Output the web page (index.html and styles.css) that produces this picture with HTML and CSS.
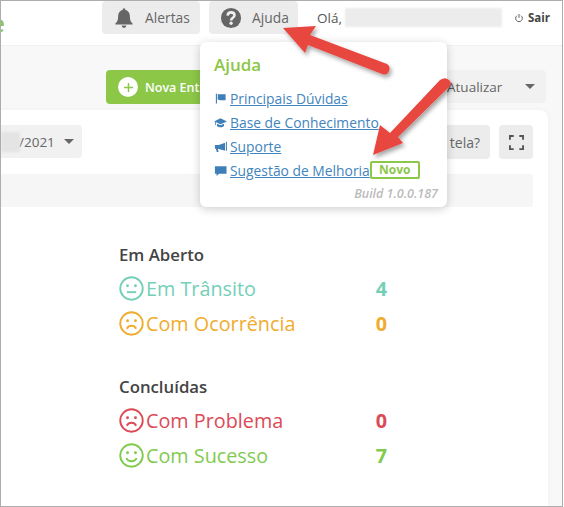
FILE: index.html
```html
<!DOCTYPE html>
<html lang="pt-BR">
<head>
<meta charset="utf-8">
<title>Ajuda</title>
<link rel="stylesheet" href="styles.css">
</head>
<body>
<div class="frame">
  <header class="topbar">
    <span class="logo">e</span>
    <div class="top-actions">
      <button class="top-btn alerts">
        <svg class="top-icon" viewBox="0 0 24 24"><path fill="#666" d="M12 1.5a1.6 1.6 0 0 0-1.6 1.7C7.3 4 5.6 6.6 5.6 9.8c0 5-1.3 6.6-3 8.2v1.2h18.8V18c-1.700-1.600-3-3.200-3-8.200 0-3.200-1.700-5.800-4.800-6.600A1.600 1.600 0 0 0 12 1.500zM9.500 20.300a2.500 2.500 0 0 0 5 0z"/></svg>
        Alertas
      </button>
      <button class="top-btn help">
        <svg class="top-icon help-icon" viewBox="0 0 24 24"><circle cx="12" cy="12" r="11" fill="#666"/><path fill="none" stroke="#eee" stroke-width="2.800" d="M8.300 9.300c.2-2.200 1.700-3.400 3.800-3.400 2.200 0 3.700 1.300 3.700 3.100 0 2.900-3.700 2.700-3.700 5.800"/><circle cx="12.100" cy="17.700" r="1.800" fill="#eee"/></svg>
        Ajuda
      </button>
      <span class="hello">Olá,</span>
      <span class="blur-name"></span>
      <span class="logout">
        <svg class="power" viewBox="0 0 12 12"><path fill="none" stroke="#444" stroke-width="1" d="M3.600 3.200a4 4 0 1 0 4.800 0M6 1.200v4.600"/></svg>
        <b>Sair</b>
      </span>
    </div>
  </header>

  <div class="toolbar">
    <button class="new-btn">
      <span class="plus-circle"><svg viewBox="0 0 12 12"><path stroke="#8cc748" stroke-width="1.600" d="M6 1v10M1 6h10"/></svg></span>
      Nova Entrega
    </button>
    <button class="refresh-btn">Atualizar<span class="caret"></span></button>
  </div>

  <main class="card">
    <div class="filters">
      <div class="date-select"><span class="blur-date"></span>/2021<span class="caret"></span></div>
      <div class="filter-right">
        <button class="tv-btn">tela?</button>
        <button class="full-btn">
          <svg viewBox="0 0 16 16"><path fill="none" stroke="#555" stroke-width="2" d="M1 5V1h4M11 1h4v4M15 11v4h-4M5 15H1v-4"/></svg>
        </button>
      </div>
    </div>
    <div class="band"></div>
    <section class="stats">
      <div class="group">
        <h3>Em Aberto</h3>
        <div class="stat teal">
          <svg class="face" viewBox="0 0 24 24"><circle cx="12" cy="12" r="10.800"/><circle class="eye" cx="8.200" cy="9.300" r="1.400"/><circle class="eye" cx="15.800" cy="9.300" r="1.400"/><path d="M7.500 15.500h9"/></svg>
          <span class="label">Em Trânsito</span><b class="num">4</b>
        </div>
        <div class="stat amber">
          <svg class="face" viewBox="0 0 24 24"><circle cx="12" cy="12" r="10.800"/><circle class="eye" cx="8.200" cy="9.300" r="1.400"/><circle class="eye" cx="15.800" cy="9.300" r="1.400"/><path d="M7.500 17c1-2 2.700-2.800 4.500-2.800s3.500.8 4.500 2.800"/></svg>
          <span class="label">Com Ocorrência</span><b class="num">0</b>
        </div>
      </div>
      <div class="group">
        <h3>Concluídas</h3>
        <div class="stat red">
          <svg class="face" viewBox="0 0 24 24"><circle cx="12" cy="12" r="10.800"/><circle class="eye" cx="8.200" cy="9.300" r="1.400"/><circle class="eye" cx="15.800" cy="9.300" r="1.400"/><path d="M7.500 17c1-2 2.700-2.800 4.500-2.800s3.500.8 4.500 2.800"/></svg>
          <span class="label">Com Problema</span><b class="num">0</b>
        </div>
        <div class="stat green">
          <svg class="face" viewBox="0 0 24 24"><circle cx="12" cy="12" r="10.800"/><circle class="eye" cx="8.200" cy="9.300" r="1.400"/><circle class="eye" cx="15.800" cy="9.300" r="1.400"/><path d="M7 14.500c1 2 2.900 3 5 3s4-1 5-3"/></svg>
          <span class="label">Com Sucesso</span><b class="num">7</b>
        </div>
      </div>
    </section>
  </main>

  <div class="popover">
    <h2>Ajuda</h2>
    <ul class="help-links">
      <li><svg viewBox="0 0 14 14"><path fill="#3f7fb8" d="M2 2h1.200v10.500H2zM4 2.500h8.500v6.500H6.500L4 8z"/></svg><a href="#">Principais Dúvidas</a></li>
      <li><svg viewBox="0 0 14 14"><path fill="#3f7fb8" d="M7 2.500 14 5.800 7 9 2.200 6.800v3H1.300V6.300L0 5.800zM3.200 8.300 7 10l3.800-1.700v2.400C9.800 11.700 8.500 12 7 12s-2.800-.3-3.800-1.300z"/></svg><a href="#">Base de Conhecimento</a></li>
      <li><svg viewBox="0 0 14 14"><path fill="#3f7fb8" d="M13 2h1v9.500h-1zM12 3 5 5.500H1v4h1l1 3.500h2l-.8-3.300H5l7 2z"/></svg><a href="#">Suporte</a></li>
      <li><svg viewBox="0 0 14 14"><path fill="#3f7fb8" d="M1 2.500h12.500v8H5.500L2.800 13v-2.500H1z"/></svg><a href="#">Sugestão de Melhoria</a><span class="badge">Novo</span></li>
    </ul>
    <div class="build">Build 1.0.0.187</div>
  </div>

  <svg class="arrows" viewBox="0 0 564 507">
    <defs><filter id="sh" x="-20%" y="-20%" width="140%" height="140%"><feDropShadow dx="2" dy="3" stdDeviation="2" flood-color="#000" flood-opacity=".35"/></filter></defs>
    <g filter="url(#sh)" fill="#e8463f">
      <path d="M283 28 316 26 310 35 387 64Q391 67 389 71 387 76 382 74L308 45 305 53z"/>
      <path d="M373 155 380 125 390 133 440 80Q446 76 450 81 452 84 449 87L398 137 403 143z"/>
    </g>
  </svg>
</div>
</body>
</html>
```
FILE: styles.css
```css
* { box-sizing: border-box; }
html, body { margin: 0; padding: 0; }
body { width: 564px; height: 507px; overflow: hidden; font-family: "Open Sans", "Noto Sans", sans-serif; background: #fff; }
button { font: inherit; border: 0; }
.frame { position: relative; width: 563px; height: 507px; border: 1px solid #adadad; overflow: hidden; background: #f8f8f8; display: flex; flex-direction: column; }

.topbar { height: 44px; background: #fff; display: flex; align-items: flex-start; justify-content: space-between; flex: none; box-shadow: 0 1px 1px #f0f0f0; position: relative; }
.logo { font-size: 24px; font-weight: 600; color: #8cc748; line-height: 30px; margin: 7px 0 0 -10px; }
.top-actions { display: flex; align-items: center; height: 33px; }
.top-btn { height: 33px; background: #ececec; border-radius: 4px; display: flex; align-items: center; color: #666; font-size: 13.800px; }
.alerts { width: 98px; padding-left: 11px; gap: 10px; margin-right: 9px; }
.help { width: 89px; padding-left: 11px; gap: 10px; margin-right: 19px; }
.top-icon { width: 22px; height: 22px; flex: none; }
.hello { color: #555; font-size: 13.500px; margin-right: 3px; }
.blur-name { width: 157px; height: 19px; background: #ececec; filter: blur(1px); margin-right: 12px; }
.logout { width: 48px; display: flex; align-items: center; gap: 4px; font-size: 11.500px; color: #444; }
.power { width: 10px; height: 10px; }

.toolbar { height: 65px; flex: none; display: flex; justify-content: space-between; align-items: flex-start; padding: 25px 16px 0 105px; position: relative; }
.new-btn { width: 120px; height: 34px; background: #8cc748; border-radius: 4px; color: #fff; font-weight: 600; font-size: 12.500px; display: flex; align-items: center; padding-left: 12px; gap: 7px; white-space: nowrap; overflow: hidden; }
.plus-circle { width: 20px; height: 20px; border-radius: 50%; background: #fff; display: flex; align-items: center; justify-content: center; flex: none; }
.plus-circle svg { width: 11px; height: 11px; }
.refresh-btn { width: 126px; height: 33px; background: #f1f1f1; border-radius: 4px; color: #666; font-size: 13.500px; display: flex; align-items: center; justify-content: space-between; padding: 0 11px 0 27px; }
.caret { display: inline-block; border: 5px solid transparent; border-top-color: #666; border-bottom: 0; }

.card { flex: 1; margin: 0 14px 0 -20px; background: #fff; border-radius: 8px 8px 0 0; box-shadow: 0 0 4px #eee; padding: 15px 15px 0 0; }
.filters { height: 34px; display: flex; justify-content: space-between; align-items: flex-start; }
.date-select { width: 101px; height: 33px; background: #f1f1f1; border-radius: 4px; display: flex; align-items: center; color: #666; font-size: 13.500px; padding-left: 20px; }
.blur-date { width: 19px; height: 20px; background: #e4e4e4; filter: blur(1px); margin-right: -1px; }
.date-select .caret { margin-left: 9px; }
.filter-right { display: flex; gap: 9px; }
.tv-btn { width: 70px; height: 34px; background: #ececec; border-radius: 4px; color: #666; font-size: 14px; text-align: right; padding-right: 10px; }
.full-btn { width: 34px; height: 34px; background: #ececec; border-radius: 4px; padding: 0; display: flex; align-items: center; justify-content: center; }
.full-btn svg { width: 15px; height: 15px; }
.band { height: 33px; margin-top: 15px; background: #f6f6f6; border-radius: 2px; }

.stats { margin: 38px 0 0 138px; width: 268px; display: flex; flex-direction: column; gap: 36px; }
.group h3 { margin: 0 0 6px; font-size: 16.800px; font-weight: 600; color: #444; line-height: 20px; }
.stat { display: flex; align-items: center; height: 35px; font-size: 19.800px; }
.face { width: 25px; height: 25px; margin-right: 2px; flex: none; fill: none; stroke: currentColor; stroke-width: 1.800; }
.eye { fill: currentColor; stroke: none; }
.label { flex: 1; }
.num { font-weight: 700; font-size: 19.800px; }
.teal { color: #74cfb8; }
.amber { color: #f0ac2e; }
.red { color: #dc4a55; }
.green { color: #7fcb4f; }

.popover { position: absolute; left: 199px; top: 41px; width: 247px; height: 165px; background: #fff; border-radius: 6px; box-shadow: 0 2px 10px rgba(0,0,0,.2); padding: 11px 14px 0; }
.popover h2 { margin: 0 0 9px; font-size: 17px; line-height: 24px; font-weight: 600; color: #8cc748; }
.help-links { list-style: none; margin: 0; padding: 0; }
.help-links li { display: flex; align-items: center; height: 24px; font-size: 13.850px; white-space: nowrap; }
.help-links svg { width: 13px; height: 13px; margin-right: 3px; flex: none; }
.help-links a { color: #4385bd; }
.badge { border: 2px solid #8cc748; border-radius: 2px; color: #8cc748; font-size: 12px; font-weight: 700; height: 18px; width: 50px; line-height: 14px; text-align: center; }
.build { text-align: right; font-size: 12.500px; font-style: italic; font-weight: 600; color: #bbb; margin: 3px -5px 0 0; }

.arrows { position: absolute; left: -1px; top: -1px; width: 564px; height: 507px; pointer-events: none; }
```
